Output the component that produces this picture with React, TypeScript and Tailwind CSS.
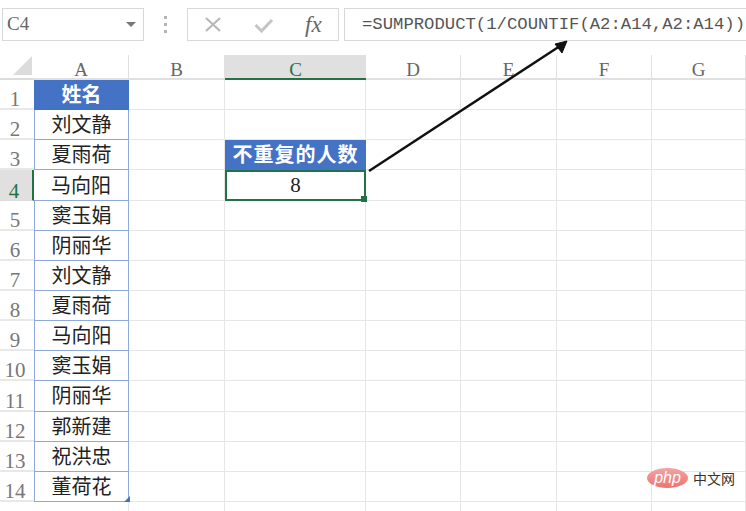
const names = ['刘文静', '夏雨荷', '马向阳', '窦玉娟', '阴丽华', '刘文静', '夏雨荷', '马向阳', '窦玉娟', '阴丽华', '郭新建', '祝洪忠', '董荷花'];
const cols = ['A', 'B', 'C', 'D', 'E', 'F', 'G'];
const rows = Array.from({ length: 14 }, (_, i) => i + 1);
const cjk = "font-['Liberation_Serif','Noto_Sans_CJK_SC',serif]";

function Toolbar() {
  return (
    <div className="flex h-[55px] items-start gap-[5px] bg-white pl-[2px] pt-[8px] pr-0">
      <div className="flex h-[33px] w-[142px] shrink-0 items-center justify-between border border-[#d8d8d8] pl-[4px] pr-[7px]">
        <span className="font-['Liberation_Serif',serif] text-[19px] text-[#666]">C4</span>
        <div className="h-0 w-0 border-x-[5px] border-t-[5px] border-x-transparent border-t-[#777]" />
      </div>
      <div className="flex w-[33px] shrink-0 flex-col items-center gap-[4px] pt-[8px]">
        <span className="h-[3px] w-[3px] bg-[#b4b4b4]" />
        <span className="h-[3px] w-[3px] bg-[#b4b4b4]" />
        <span className="h-[3px] w-[3px] bg-[#b4b4b4]" />
      </div>
      <div className="flex h-[33px] w-[152px] shrink-0 items-center border border-[#d8d8d8] pl-[17px]">
        <svg width="16" height="15" viewBox="0 0 16 15" className="mr-[33px]">
          <path d="M1 1 15 14M15 1 1 14" stroke="#b8b8b8" strokeWidth="2.200" fill="none" />
        </svg>
        <svg width="20" height="16" viewBox="0 0 20 16" className="mr-[31px]">
          <path d="M1.500 8 7.500 14 18 3" stroke="#c4c4c4" strokeWidth="3" fill="none" />
        </svg>
        <span className="font-['Liberation_Serif',serif] text-[23px] italic leading-none text-[#666]">fx</span>
      </div>
      <div className="flex h-[33px] min-w-0 flex-1 items-center overflow-hidden whitespace-nowrap border-y border-l border-[#d8d8d8] pl-[17px] font-['Liberation_Mono',monospace] text-[17.250px] text-[#555]">
        =SUMPRODUCT(1/COUNTIF(A2:A14,A2:A14))
      </div>
    </div>
  );
}

function Sheet() {
  return (
    <div className="grid grid-cols-[34px_95px_96px_141px_95px_96px_95px_94px] grid-rows-[25px_repeat(14,30.150px)_9px] font-['Liberation_Serif',serif]">
      <div className="flex items-end justify-end border-b-[2px] border-[#dcdcdc] pb-[3px] pr-[2px]">
        <div className="h-0 w-0 border-b-[19px] border-l-[19px] border-b-[#dcdcdc] border-l-transparent" />
      </div>
      {cols.map((c) => (
        <div
          key={c}
          className={
            c === 'C'
              ? 'flex items-center justify-center border-b-[2px] border-[#217346] bg-[#e0e0e0] pt-[8px] text-[19px] text-[#217346]'
              : 'flex items-center justify-center border-b-[2px] border-r border-[#e0e0e0] pt-[8px] text-[19px] text-[#666]'
          }
        >
          {c}
        </div>
      ))}
      {rows.map((r) => (
        <Row key={r} r={r} />
      ))}
      <div />
      <div className="border-r border-[#e6e6e6]" />
      {cols.slice(1).map((c) => (
        <div key={c} className="border-r border-[#e6e6e6]" />
      ))}
    </div>
  );
}

function Row({ r }: { r: number }) {
  const active = r === 4;
  return (
    <>
      <div
        className={
          active
            ? 'flex items-end justify-center border-b border-r-[2px] border-[#dcdcdc] border-r-[#217346] bg-[#e0e0e0] pr-[4px] text-[21px] leading-[17px] text-[#217346]'
            : 'flex items-end justify-center border-b-[2px] border-[#e8e8e8] pr-[4px] text-[21px] leading-[17px] text-[#777]'
        }
      >
        {r}
      </div>
      {r === 1 ? (
        <div className={`flex items-center justify-center bg-[#4472c4] text-[20px] font-bold text-white ${cjk}`}>姓名</div>
      ) : (
        <div className={`relative flex items-center justify-center border-b border-r-[1.500px] border-[#8ea9db] pt-[1px] text-[20px] text-[#222] ${cjk} ${active ? '' : 'border-l-[1.500px]'}`}>
          {names[r - 2]}
          {r === 14 && <span className="absolute -bottom-px -right-[2px] h-[6px] w-[6px] bg-[#4472c4] [clip-path:polygon(100%_0,100%_100%,0_100%)]" />}
        </div>
      )}
      {cols.slice(1).map((c) => (
        <Cell key={c} col={c} r={r} />
      ))}
    </>
  );
}

function Cell({ col, r }: { col: string; r: number }) {
  if (col === 'C' && r === 3) {
    return <div className={`flex items-center justify-center bg-[#4472c4] text-[20px] font-bold tracking-[1px] text-white ${cjk}`}>不重复的人数</div>;
  }
  if (col === 'C' && r === 4) {
    return (
      <div className="relative flex items-center justify-center border-[2px] border-[#217346] pt-[1px] text-[21px] text-[#222]">
        8
        <span className="absolute -bottom-[3px] -right-[3px] h-[6px] w-[6px] bg-[#217346]" />
      </div>
    );
  }
  return <div className="border-b border-r border-[#e6e6e6]" />;
}

export default function App() {
  return (
    <div className="relative h-[511px] w-[746px] overflow-hidden bg-white">
      <Toolbar />
      <Sheet />
      <svg width="746" height="511" className="pointer-events-none absolute left-0 top-0">
        <path d="M369 171 560 46" stroke="#111" strokeWidth="2.400" fill="none" />
        <path d="M567 41 555 44 562 53Z" fill="#111" stroke="#111" strokeWidth="1" />
      </svg>
      <div className="absolute left-[647px] top-[468px] flex items-center gap-[5px]">
        <div className="flex h-[20px] w-[41px] items-center justify-center rounded-[50%] bg-gradient-to-b from-[#f4a3a3] to-[#ee7272] font-['Liberation_Sans',sans-serif] text-[16px] italic leading-none text-white">php</div>
        <span className="font-['Noto_Sans_CJK_SC',sans-serif] text-[14px] leading-none text-[#333]">中文网</span>
      </div>
    </div>
  );
}
